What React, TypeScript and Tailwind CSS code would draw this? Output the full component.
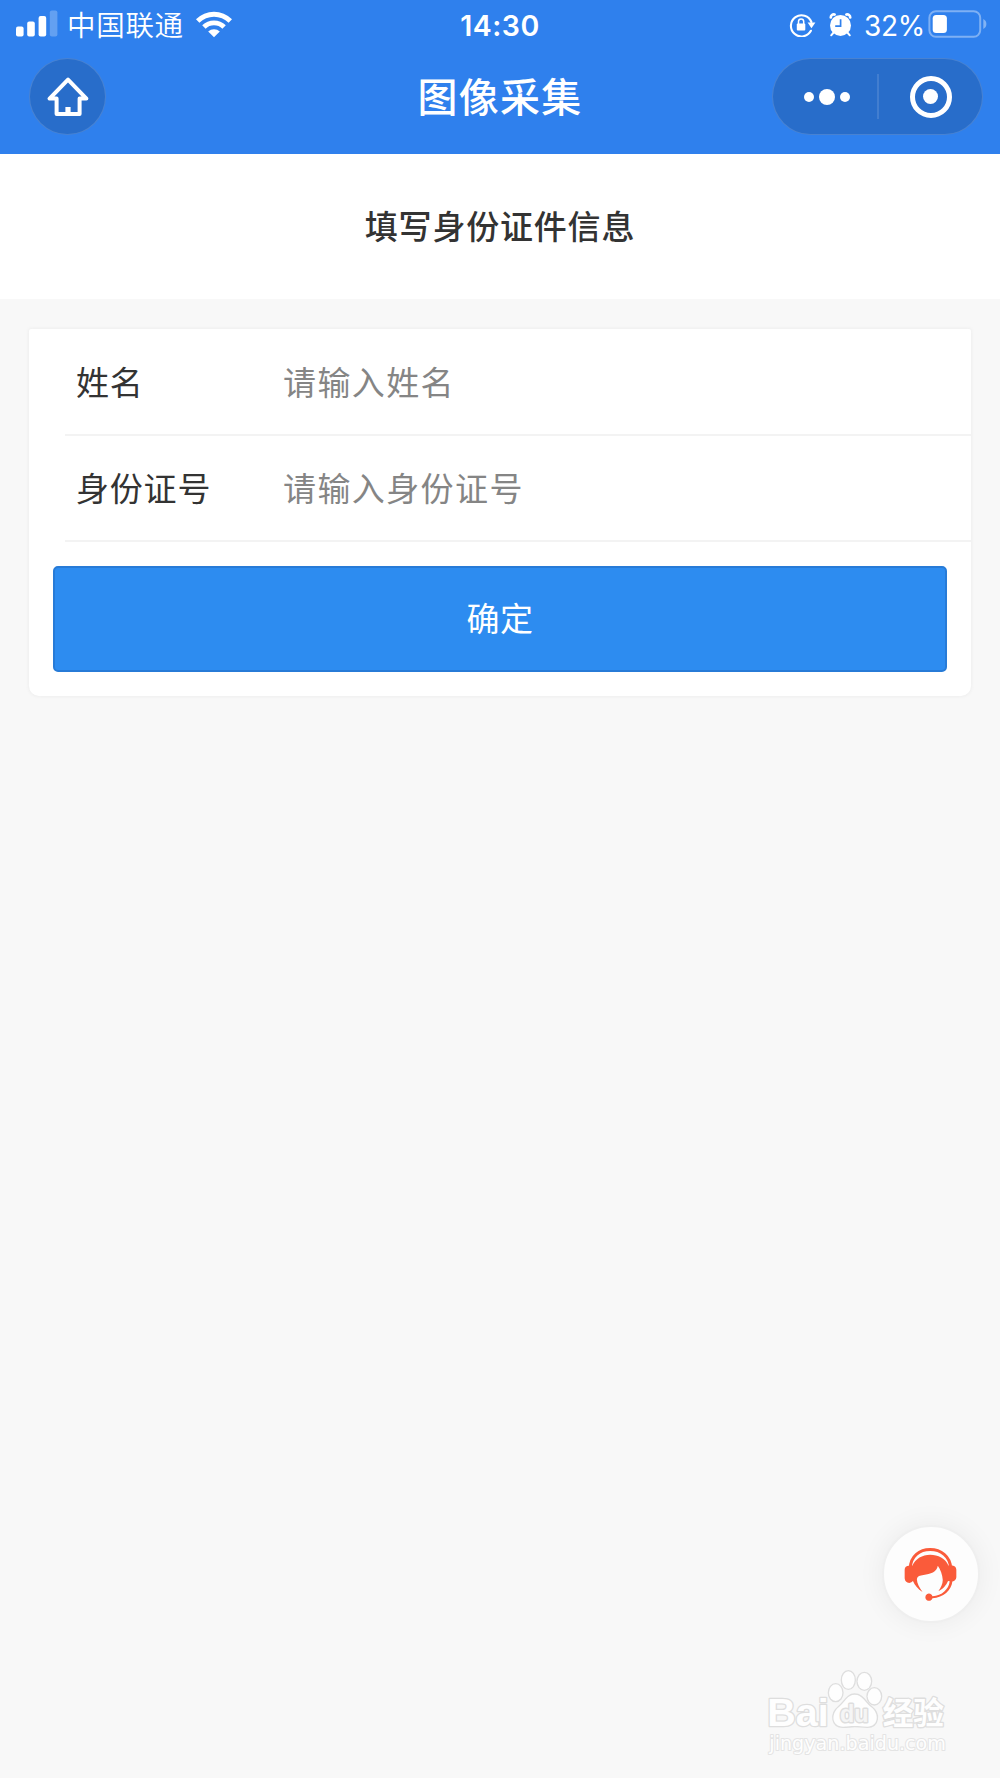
import { useState } from "react";

const fields = [
	{ id: "name", label: "姓名", placeholder: "请输入姓名" },
	{ id: "idNumber", label: "身份证号", placeholder: "请输入身份证号" },
];

const SignalIcon = () => (
	<svg viewBox="0 0 42 27" className="h-[27px] w-[42px]" fill="#fff">
		<rect x="0" y="16.5" width="7.6" height="10" rx="2" />
		<rect x="11.2" y="11.5" width="7.6" height="15" rx="2" />
		<rect x="22.6" y="6" width="7.6" height="20.5" rx="2" />
		<rect x="33.8" y="0.5" width="7.6" height="26" rx="2" opacity="0.25" />
	</svg>
);

const WifiIcon = () => (
	<svg viewBox="0 0 38 28" className="h-7 w-[38px]" fill="#fff">
		<path d="M1 9.2A25.5 25.5 0 0 1 37 9.2L33.6 12.7A20.7 20.7 0 0 0 4.4 12.7Z" />
		<path d="M7.2 15.3A16.8 16.8 0 0 1 30.8 15.3L27.4 18.8A12 12 0 0 0 10.6 18.8Z" />
		<path d="M13.2 21.6A8.2 8.2 0 0 1 24.8 21.6L19 27.3Z" />
	</svg>
);

const RotationLockIcon = () => (
	<svg viewBox="0 0 27 24" className="h-6 w-[27px]" fill="none">
		<path
			d="M21.9 17.8A10.6 10.6 0 1 1 22.4 9"
			stroke="#fff"
			strokeWidth="2.1"
			strokeLinecap="round"
		/>
		<path d="M18.6 9.4H26.4L22.5 15.2Z" fill="#fff" />
		<rect x="7.8" y="10.5" width="8.5" height="7" rx="1" fill="#fff" />
		<path
			d="M9.5 11V8.6A2.6 2.6 0 0 1 14.7 8.6V11"
			stroke="#fff"
			strokeWidth="1.5"
		/>
	</svg>
);

const AlarmIcon = () => (
	<svg viewBox="0 0 23 24" className="h-6 w-[23px]" fill="none">
		<path
			d="M4.6 19.5L2.2 22.3M18.4 19.5L20.8 22.3"
			stroke="#fff"
			strokeWidth="2"
			strokeLinecap="round"
		/>
		<path
			d="M1.8 4.4A3 3 0 0 1 5.6 1.5M21.2 4.4A3 3 0 0 0 17.4 1.5"
			stroke="#fff"
			strokeWidth="2.7"
			strokeLinecap="round"
		/>
		<circle cx="11.5" cy="12.4" r="10.5" fill="#fff" />
		<path d="M11.6 6.2V13.2H6.2" stroke="#2f80ed" strokeWidth="1.7" />
	</svg>
);

const BatteryIcon = () => (
	<svg viewBox="0 0 60 28" className="h-7 w-[60px]" fill="none">
		<rect
			x="1.4"
			y="1.2"
			width="50.8"
			height="25.6"
			rx="6.5"
			stroke="#fff"
			strokeOpacity="0.38"
			strokeWidth="2"
		/>
		<rect x="4.7" y="5" width="14.2" height="18" rx="3.5" fill="#fff" />
		<path d="M55.3 9A5.6 5.6 0 0 1 55.3 19Z" fill="#fff" fillOpacity="0.4" />
	</svg>
);

const HomeIcon = () => (
	<svg viewBox="0 0 42 40" className="h-10 w-[42px]" fill="none">
		<path
			d="M21 2.6L2.6 21.6H9.6V37H32.6V21.6H39.4Z"
			stroke="#fff"
			strokeWidth="4"
			strokeLinejoin="round"
		/>
		<rect x="18.4" y="30" width="5.2" height="7" fill="#fff" />
	</svg>
);

const HeadsetIcon = () => (
	<svg viewBox="130 138 166 168" className="h-14 w-[55px]" fill="#fa5b3a">
		<path
			d="M152 204C153 168 180 148 212 148S272 168 274 204"
			fill="none"
			stroke="#fa5b3a"
			strokeWidth="9"
		/>
		<path d="M158 197H146Q135 198 135 210V235Q136 248 149 249Q156 248 160 243C166 256 175 268 189 276C179 263 171 248 172 236C173 229 181 226 192 225C213 222 232 216 235 197C243 208 249 224 250 240C250 253 244 263 237 273C251 268 260 256 266 243L271 244C268 268 248 288 219 289A11 11 0 1 0 219 295C252 294 276 272 279 245Q290 242 291 232V209Q290 197 279 196H267C258 175 236 164 212 164S168 176 158 197Z" />
	</svg>
);

const Watermark = () => (
	<svg
		viewBox="0 0 780 384"
		className="pointer-events-none absolute right-0 bottom-0 h-32 w-[260px]"
		fill="#fefefe"
		stroke="#dedede"
		strokeWidth="8"
		strokeLinejoin="round"
		style={{ paintOrder: "stroke" }}
	>
		<text
			x="82"
			y="227"
			textLength="184"
			lengthAdjust="spacingAndGlyphs"
			className="font-['Liberation_Sans'] text-[116px] font-bold"
		>
			Bai
		</text>
		<ellipse cx="287" cy="128" rx="20" ry="25" />
		<ellipse cx="325" cy="90" rx="19" ry="26" />
		<ellipse cx="373" cy="94" rx="20" ry="25" />
		<ellipse cx="403" cy="139" rx="20" ry="24" />
		<path d="M344 134C367 134 376 158 393 171C420 191 415 230 382 230C365 230 356 228 344 228S323 230 309 230C276 230 271 192 297 171C315 156 322 134 344 134Z" />
		<text
			x="300"
			y="216"
			textLength="86"
			lengthAdjust="spacingAndGlyphs"
			fill="#f5f5f5"
			strokeWidth="9"
			className="font-['Liberation_Sans'] text-[74px] font-bold"
		>
			du
		</text>
		<text
			x="428"
			y="221"
			textLength="184"
			lengthAdjust="spacingAndGlyphs"
			className="font-['Noto_Sans_CJK_SC'] text-[92px] font-bold"
		>
			经验
		</text>
		<text
			x="88"
			y="300"
			textLength="530"
			lengthAdjust="spacingAndGlyphs"
			stroke="#e4e4e4"
			strokeWidth="6"
			className="font-['DejaVu_Sans'] text-[56px]"
		>
			jingyan.baidu.com
		</text>
	</svg>
);

const StatusBar = () => (
	<div className="grid h-[50px] grid-cols-3 text-white">
		<div className="flex items-start pt-2.5 pl-4">
			<SignalIcon />
			<span className="ml-[9px] text-[28.5px] leading-[28px] font-[350] tracking-[0.7px]">
				中国联通
			</span>
			<div className="ml-[11px]">
				<WifiIcon />
			</div>
		</div>
		<div className="pt-[11px] text-center font-['Inter'] text-[28.5px] leading-[30px] font-semibold tracking-[0.5px]">
			14:30
		</div>
		<div className="flex items-start justify-end pt-2.5 pr-[12px]">
			<div className="mt-[3px] mr-[13px]">
				<RotationLockIcon />
			</div>
			<div className="mt-[3px] mr-3">
				<AlarmIcon />
			</div>
			<span className="mr-[3px] pt-px font-['Inter'] text-[28px] leading-[30px] tracking-[-0.3px]">
				32%
			</span>
			<BatteryIcon />
		</div>
	</div>
);

const NavBar = () => (
	<div className="flex h-[104px] items-start justify-between pt-2 pr-[17px] pl-[29px] text-white">
		<div className="flex w-[199px]">
			<button
				type="button"
				aria-label="首页"
				className="flex size-[77px] items-center justify-center rounded-full border border-white/15 bg-[#286dca]"
			>
				<HomeIcon />
			</button>
		</div>
		<h1 className="text-[40px] leading-[75px] font-medium tracking-[1.2px]">
			图像采集
		</h1>
		<div className="flex h-[77px] w-[211px] items-center rounded-full border border-white/15 bg-[#286dca]">
			<div className="flex w-[104px] items-center justify-center gap-[5px] pl-1">
				<span className="size-2.5 rounded-full bg-white" />
				<span className="size-4 rounded-full bg-white" />
				<span className="size-2.5 rounded-full bg-white" />
			</div>
			<div className="h-[45px] w-0.5 bg-white/12" />
			<div className="flex flex-1 items-center justify-center">
				<span className="flex size-[42px] items-center justify-center rounded-full border-5 border-white">
					<span className="size-[15px] rounded-full bg-white" />
				</span>
			</div>
		</div>
	</div>
);

export default function App() {
	const [values, setValues] = useState<Record<string, string>>({});

	return (
		<div className="relative h-[1778px] w-[1000px] overflow-hidden bg-[#f8f8f8] font-['Noto_Sans_CJK_SC',sans-serif] text-[#333]">
			<header className="bg-[#2f80ed]">
				<StatusBar />
				<NavBar />
			</header>

			<div className="h-[145px] bg-white pt-[47px] text-center text-[33px] leading-[48px] font-medium tracking-[0.8px]">
				填写身份证件信息
			</div>

			<form
				className="mx-[29px] mt-[30px] h-[367px] rounded-t-xs rounded-b-[10px] bg-white pt-px shadow-[0_0_3px_1px_#efefef]"
				onSubmit={(e) => e.preventDefault()}
			>
				{fields.map((field) => (
					<div
						key={field.id}
						className="ml-9 flex h-[106px] items-center border-b-2 border-[#f3f3f3] pl-[11px] text-[33px]"
					>
						<label htmlFor={field.id} className="w-[207px] tracking-[0.8px]">
							{field.label}
						</label>
						<input
							id={field.id}
							value={values[field.id] ?? ""}
							placeholder={field.placeholder}
							onChange={(e) =>
								setValues({ ...values, [field.id]: e.target.value })
							}
							className="min-w-0 flex-1 tracking-[1.4px] outline-none placeholder:text-[#858585]"
						/>
					</div>
				))}
				<button
					type="submit"
					className="mx-6 mt-6 block h-[106px] w-[894px] rounded-[5px] border-2 border-[#277bd7] bg-[#2d8cf0] pb-0.5 text-[33px] tracking-[0.5px] text-white"
				>
					确定
				</button>
			</form>

			{/* Customer service */}
			<button
				type="button"
				aria-label="客服"
				className="absolute top-[1525px] left-[882px] flex size-[98px] items-center justify-center rounded-full border-2 border-[#efefef] bg-[#fdfdfd] pr-px shadow-[0_0_28px_rgba(0,0,0,0.06)]"
			>
				<HeadsetIcon />
			</button>

			<Watermark />
		</div>
	);
}
